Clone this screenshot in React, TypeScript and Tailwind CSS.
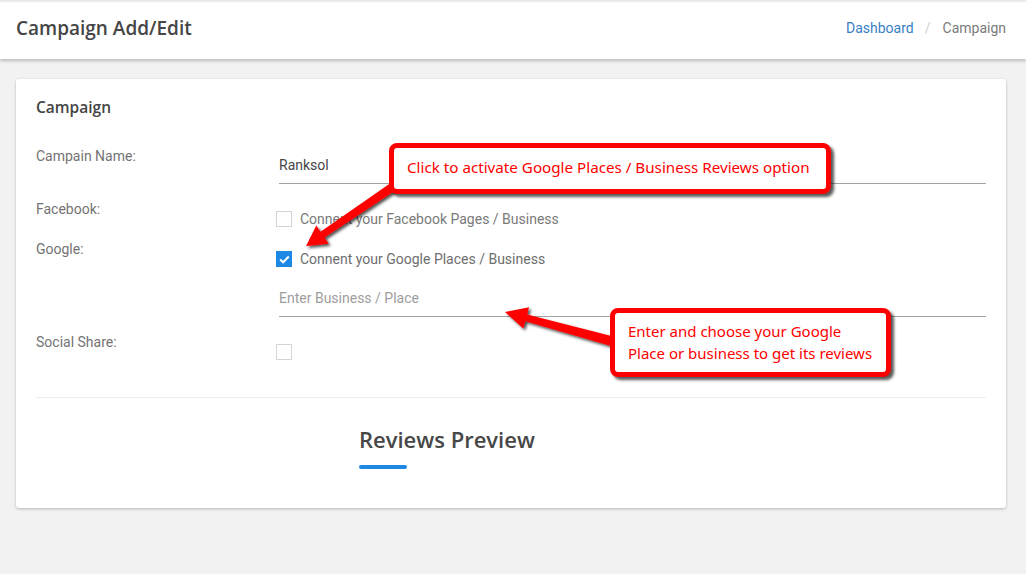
import React from "react";

const roboto = { fontFamily: "Roboto, 'Liberation Sans', sans-serif" };

function Check({ checked }: { checked?: boolean }) {
  if (checked) {
    return (
      <span className="flex h-[16px] w-[16px] shrink-0 items-center justify-center bg-[#1e88e5]">
        <svg width="11" height="9" viewBox="0 0 11 9">
          <path d="M1.2 4.6 L4.1 7.3 L9.8 1.5" fill="none" stroke="#fff" strokeWidth="2" />
        </svg>
      </span>
    );
  }
  return <span className="h-[16px] w-[16px] shrink-0 border border-[#d4d4d4] bg-white" />;
}

function Label({ children }: { children: React.ReactNode }) {
  return <div className="w-[240px] shrink-0 text-[14px] leading-[20px] text-[#737373]">{children}</div>;
}

export default function App() {
  return (
    <div className="relative h-[574px] w-full overflow-hidden bg-[#f2f2f2]" style={roboto}>
      {/* header */}
      <header className="relative bg-white shadow-[0_2px_3px_rgba(0,0,0,0.22)]">
        <div className="h-[3px] bg-gradient-to-b from-[#e2e2e2] to-white" />
        <div className="flex h-[56px] items-center justify-between pl-4 pr-5 pb-[6px]">
          <h1
            className="text-[19px] font-semibold leading-[24px] text-[#454545]"
            style={{ fontFamily: "'Open Sans', sans-serif" }}
          >
            Campaign Add/Edit
          </h1>
          <nav className="flex items-center text-[14px] leading-[20px]">
            <span className="text-[#3a7fc4]">Dashboard</span>
            <span className="px-[11px] text-[#cfcfcf]">/</span>
            <span className="pl-[1px] text-[#7a7a7a]">Campaign</span>
          </nav>
        </div>
      </header>

      {/* main card */}
      <main className="pl-4 pr-5 pt-[20px]">
        <section className="h-[429px] rounded-[3px] bg-white px-5 pt-[18px] shadow-[0_1px_3px_rgba(0,0,0,0.25)]">
          <h2
            className="text-[15.5px] font-semibold leading-[20px] text-[#444]"
            style={{ fontFamily: "'Open Sans', sans-serif" }}
          >
            Campaign
          </h2>

          <div className="mt-[29px] flex">
            <Label>Campain Name:</Label>
            <div className="flex-1 pl-[3px]">
              <div className="border-b border-[#a3a3a3] pt-[9px] pb-[8px] text-[14px] leading-[20px] text-[#464646]">
                Ranksol
              </div>
            </div>
          </div>

          <div className="mt-[15px] flex h-[40px]">
            <Label>Facebook:</Label>
            <div className="flex-1 pt-[10px]">
              <div className="flex h-[20px] items-center gap-[8px] text-[14px] text-[#7a7a7a]">
                <Check />
                <span>Connent your Facebook Pages / Business</span>
              </div>
            </div>
          </div>

          <div className="flex">
            <Label>Google:</Label>
            <div className="flex-1 pt-[10px]">
              <div className="flex h-[20px] items-center gap-[8px] text-[14px] text-[#6e6e6e]">
                <Check checked />
                <span>Connent your Google Places / Business</span>
              </div>
              <div className="mt-[9px] ml-[3px] border-b border-[#a3a3a3] pt-[10px] pb-[8px] text-[14px] leading-[20px] text-[#9e9e9e]">
                Enter Business / Place
              </div>
            </div>
          </div>

          <div className="mt-[15px] flex">
            <Label>Social Share:</Label>
            <div className="flex-1 pt-[10px]">
              <div className="flex h-[20px] items-center">
                <Check />
              </div>
            </div>
          </div>

          <div className="mt-[35px] border-t border-[#ececec]" />

          <div className="pl-[323px] pt-[26px]">
            <h3
              className="text-[22px] font-semibold leading-[30px] text-[#474747]"
              style={{ fontFamily: "'Open Sans', sans-serif" }}
            >
              Reviews Preview
            </h3>
            <div className="mt-[11px] h-[4px] w-[48px] rounded-full bg-[#1e88e5]" />
          </div>
        </section>
      </main>

      {/* annotation arrows */}
      <svg className="pointer-events-none absolute left-0 top-0" width="1026" height="574">
        <defs>
          <filter id="sh" x="-20%" y="-20%" width="140%" height="140%">
            <feDropShadow dx="2" dy="2" stdDeviation="1.5" floodColor="#000" floodOpacity="0.7" />
          </filter>
        </defs>
        <polygon
          filter="url(#sh)"
          fill="#ff0000"
          points="397.5,178.2 320.5,231.8 316.3,225.6 306,246 328.7,243.8 324.5,237.6 402.5,185.8"
        />
        <polygon
          filter="url(#sh)"
          fill="#ff0000"
          points="616.3,337.2 527.1,314.4 529.1,307.2 505,312 523.3,328.4 525.3,321.2 613.7,346.8"
        />
      </svg>

      {/* callouts */}
      <div
        className="absolute left-[389px] top-[143px] flex h-[51px] w-[442px] items-center rounded-[8px] border-[5px] border-[#ff0000] bg-white pb-[3px] pl-[13px] text-[15.2px] leading-[20px] text-[#ff0000] shadow-[3px_3px_3px_rgba(0,0,0,0.65)]"
        style={{ fontFamily: "'Noto Sans', sans-serif" }}
      >
        Click to activate Google Places / Business Reviews option
      </div>
      <div
        className="absolute left-[610px] top-[308px] h-[69px] w-[281px] rounded-[8px] border-[5px] border-[#ff0000] bg-white pl-[13px] pt-[7px] text-[15px] leading-[22px] text-[#ff0000] shadow-[3px_3px_3px_rgba(0,0,0,0.65)]"
        style={{ fontFamily: "'Noto Sans', sans-serif" }}
      >
        Enter and choose your Google
        <br />
        Place or business to get its reviews
      </div>
    </div>
  );
}
